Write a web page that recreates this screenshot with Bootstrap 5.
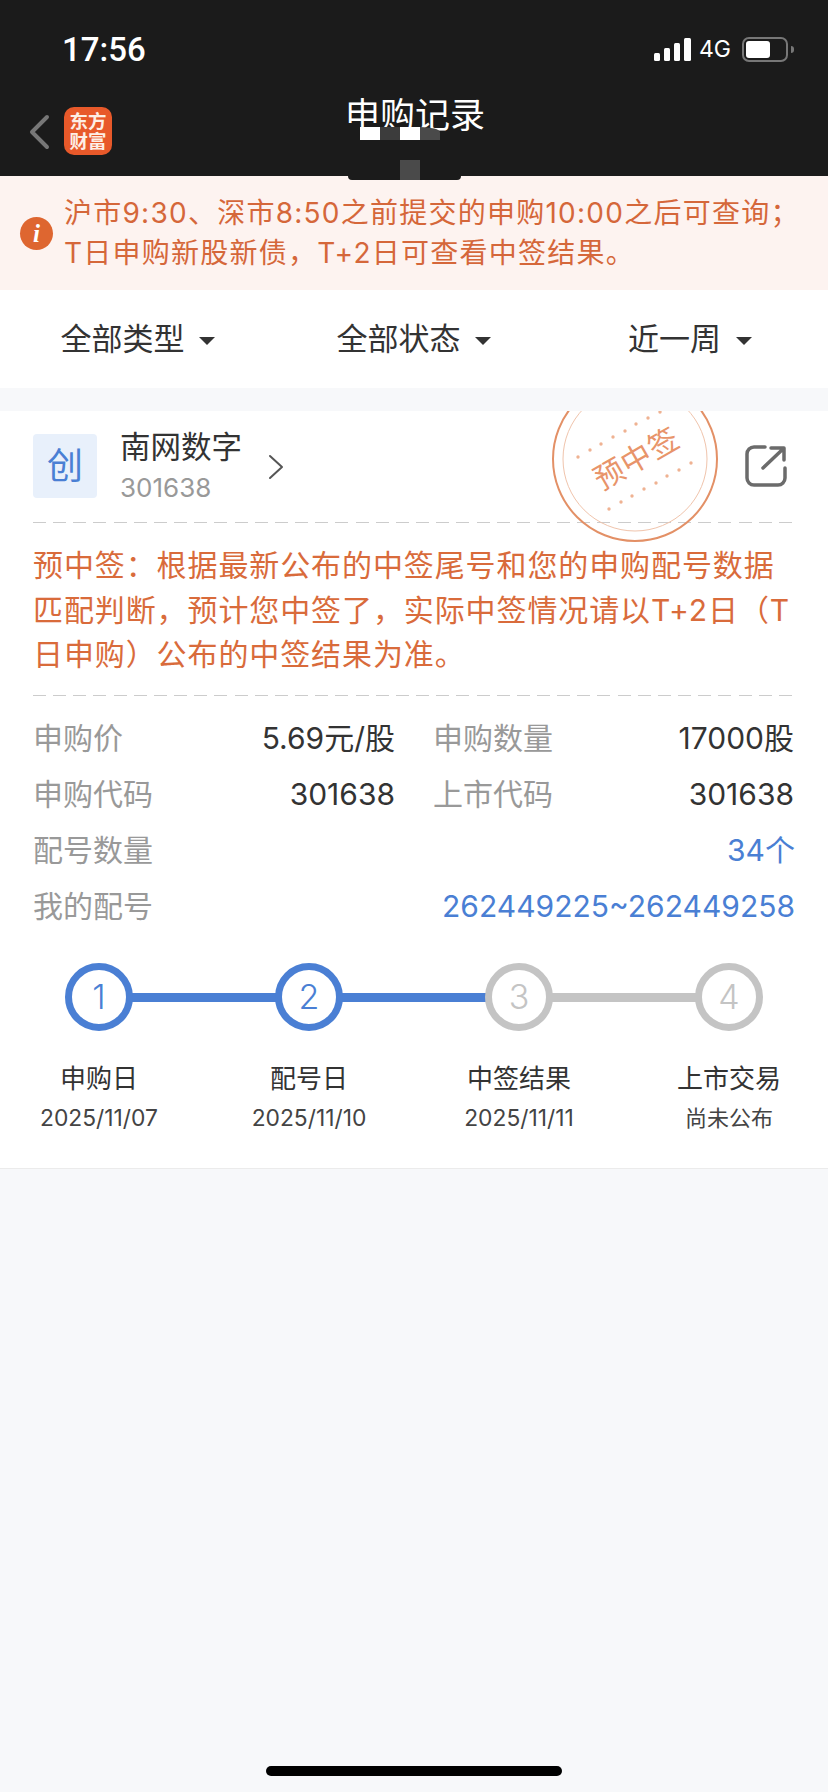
<!DOCTYPE html>
<html lang="zh-CN">
<head>
  <meta charset="UTF-8" />
  <meta name="viewport" content="width=device-width, initial-scale=1.0" />
  <title>申购记录</title>
  <link href="https://cdn.jsdelivr.net/npm/bootstrap@5.3.2/dist/css/bootstrap.min.css" rel="stylesheet">
  <style>
    body {
      width: 828px;
      height: 1792px;
      overflow: hidden;
      background-color: #f7f8fa;
      font-family: Inter, "Noto Sans CJK SC", sans-serif;
      color: #333;
    }
    .top-head {
      height: 176px;
      background-color: #1b1b1b;
      color: #fff;
    }
    .status-row { height: 98px; padding: 0 34px 0 62px; }
    .status-time { font-family: Roboto, "Liberation Sans", sans-serif; font-size: 33px; font-weight: 500; margin-top: 1px; }
    .net-label { font-size: 23px; margin: 0 11px 0 8px; line-height: 1; }
    .batt-box { width: 46px; height: 25px; border: 2px solid #777; border-radius: 7px; padding: 2px; }
    .batt-fill { width: 24px; height: 100%; background-color: #fff; border-radius: 3px; }
    .batt-nub { width: 3px; height: 7px; margin-left: 3px; background-color: #777; border-radius: 0 3px 3px 0; }
    .nav-line { height: 78px; padding-left: 28px; }
    .app-logo {
      width: 48px;
      height: 48px;
      margin: 9px 0 0 14px;
      border-radius: 10px;
      background-color: #e8592a;
      font-size: 18.5px;
      font-weight: 700;
      line-height: 20px;
      text-align: center;
      padding-top: 4px;
      color: #fdeee5;
    }
    .nav-title {
      top: -6px;
      left: 0;
      right: 0;
      font-size: 35px;
      line-height: 46px;
      text-align: center;
      padding-left: 2px;
    }
    .glitch { top: 127px; left: 360px; height: 13px; width: 80px; display: flex; }
    .glitch i { display: block; width: 20px; height: 100%; }
    .glitch .tone-dark { background-color: #3c3c3c; }
    .glitch .tone-mid { background-color: #4a4a4a; border-radius: 0 100% 0 0 / 0 40% 0 0; }
    .glitch-b { top: 160px; left: 400px; width: 20px; height: 20px; background-color: #4a4a4a; z-index: 2; }
    .notch { top: 176px; left: 348px; width: 113px; height: 4px; background-color: #1b1b1b; border-radius: 0 0 6px 6px; z-index: 1; }
    .notice-box {
      height: 114px;
      background-color: #fdf3f0;
      color: #d5673a;
      padding-left: 20px;
    }
    .notice-ico {
      width: 33px;
      height: 33px;
      flex: none;
      background-color: #de6630;
      color: #fff;
      font-family: "Liberation Serif", serif;
      font-style: italic;
      font-weight: 700;
      font-size: 25px;
      line-height: 33px;
      text-align: center;
    }
    .notice-txt { margin-left: 11px; font-size: 28px; line-height: 40px; letter-spacing: 1.25px; white-space: nowrap; }
    .filter-bar { height: 98px; background-color: #fff; margin-bottom: 23px; font-size: 31px; color: #333; }
    .filter-bar .dropdown-toggle::after {
      margin-left: 15px;
      vertical-align: 5px;
      border-top: 8px solid #333;
      border-right: 8px solid transparent;
      border-left: 8px solid transparent;
      border-bottom: 0;
    }
    .sub-card { height: 758px; background-color: #fff; border-bottom: 1px solid #ebebeb; }
    .sub-head { height: 111px; padding: 23px 41px 0 33px; }
    .mkt-tag {
      width: 64px;
      height: 64px;
      flex: none;
      background-color: #e8f0fb;
      border-radius: 4px;
      color: #4a7fd4;
      font-size: 36px;
      line-height: 64px;
      text-align: center;
    }
    .stock-info { margin-left: 23px; }
    .stock-name { font-size: 30.5px; line-height: 36px; margin-top: -5px; }
    .stock-code { font-size: 26px; line-height: 30px; color: #999; margin-top: 8px; }
    .stock-arrow { margin: 20px 0 0 26px; }
    .stamp { top: -35px; left: 552px; }
    .share-ico { margin-left: auto; margin-top: 11px; z-index: 1; }
    .dash-line {
      height: 1px;
      margin: 0 36px 0 33px;
      background-image: repeating-linear-gradient(to right, #ccc 0, #ccc 13px, transparent 13px, transparent 20.16px);
    }
    .win-note {
      height: 172px;
      padding: 20px 30px 0 33px;
      color: #d96b3b;
      font-size: 30px;
      line-height: 44.5px;
      letter-spacing: 0.9px;
    }
    .info-list { padding: 14px 33px 0 33px; font-size: 30px; height: 267px; }
    .info-row { height: 56px; }
    .info-lbl { color: #999; }
    .info-val { color: #333; }
    .info-link { color: #4a7fd4; }
    .half-left { width: 362px; }
    .half-right { width: 361px; margin-left: 38px; }
    .step-wrap { margin-left: -6px; width: 840px; }
    .step-item { width: 210px; }
    .step-dot {
      width: 68px;
      height: 68px;
      margin: 0 auto;
      border: 7px solid #c4c4c4;
      background-color: #fff;
      color: #c4c4c4;
      font-size: 34px;
      font-weight: 300;
      line-height: 54px;
      z-index: 1;
    }
    .step-dot.is-on { border-color: #4a7fd4; color: #4a7fd4; }
    .step-link { top: 30px; left: 105px; width: 210px; height: 9px; background-color: #c4c4c4; }
    .step-link.is-on { background-color: #4a7fd4; }
    .step-name { margin-top: 30px; font-size: 26px; line-height: 36px; color: #333; }
    .step-date { margin-top: 6px; font-size: 22.8px; line-height: 30px; color: #444; }
    .step-date.is-text { font-size: 22px; }
    .home-bar {
      bottom: 16px;
      left: 266px;
      width: 296px;
      height: 10px;
      background-color: #000;
      border-radius: 5px;
    }
  </style>
</head>
<body class="position-relative">
  <header class="top-head">
    <div class="status-row d-flex align-items-center">
      <div class="status-time">17:56</div>
      <div class="ms-auto d-flex align-items-center">
        <svg width="37" height="23" viewBox="0 0 37 23" fill="#fff">
          <rect x="0" y="15" width="6" height="8" rx="1.5"/>
          <rect x="10" y="10" width="6" height="13" rx="1.5"/>
          <rect x="20" y="5" width="6" height="18" rx="1.5"/>
          <rect x="30" y="0" width="7" height="23" rx="1.5"/>
        </svg>
        <span class="net-label">4G</span>
        <div class="batt-box"><div class="batt-fill"></div></div>
        <div class="batt-nub"></div>
      </div>
    </div>
    <div class="nav-line d-flex position-relative">
      <svg class="mt-3" width="22" height="36" viewBox="0 0 22 36" fill="none" stroke="#777" stroke-width="4" stroke-linecap="round" stroke-linejoin="round">
        <path d="M19 3 L4 18 L19 33"/>
      </svg>
      <div class="app-logo">东方<br>财富</div>
      <div class="nav-title position-absolute">申购记录</div>
    </div>
  </header>

  <div class="glitch position-absolute">
    <i class="bg-white"></i><i class="tone-dark"></i><i class="bg-white"></i><i class="tone-mid"></i>
  </div>
  <div class="glitch-b position-absolute"></div>
  <div class="notch position-absolute"></div>

  <section class="notice-box d-flex align-items-center">
    <div class="notice-ico rounded-circle">i</div>
    <div class="notice-txt">沪市9:30、深市8:50之前提交的申购10:00之后可查询；<br>T日申购新股新债，T+2日可查看中签结果。</div>
  </section>

  <div class="filter-bar row g-0 align-items-center text-center">
    <div class="col-4"><span class="dropdown-toggle">全部类型</span></div>
    <div class="col-4"><span class="dropdown-toggle">全部状态</span></div>
    <div class="col-4"><span class="dropdown-toggle">近一周</span></div>
  </div>

  <section class="sub-card position-relative overflow-hidden">
    <div class="sub-head d-flex position-relative">
      <div class="mkt-tag">创</div>
      <div class="stock-info">
        <div class="stock-name">南网数字</div>
        <div class="stock-code">301638</div>
      </div>
      <svg class="stock-arrow" width="16" height="26" viewBox="0 0 16 26" fill="none" stroke="#555" stroke-width="2" stroke-linecap="round" stroke-linejoin="round">
        <path d="M2 2 L14 13 L2 24"/>
      </svg>
      <svg class="stamp position-absolute" width="166" height="166" viewBox="0 0 166 166">
        <circle cx="83" cy="83" r="82" fill="none" stroke="#e39066" stroke-width="2"/>
        <circle cx="83" cy="83" r="72" fill="none" stroke="#f0c4ac" stroke-width="1"/>
        <g fill="#efb292">
          <circle cx="26" cy="81" r="1.7"/><circle cx="38" cy="74" r="1.7"/><circle cx="49" cy="68" r="1.7"/><circle cx="61" cy="61" r="1.7"/>
          <circle cx="73" cy="55" r="1.7"/><circle cx="84" cy="48" r="1.7"/><circle cx="96" cy="42" r="1.7"/><circle cx="108" cy="36" r="1.7"/>
          <circle cx="57" cy="133" r="1.7"/><circle cx="69" cy="126" r="1.7"/><circle cx="80" cy="120" r="1.7"/><circle cx="92" cy="113" r="1.7"/>
          <circle cx="104" cy="107" r="1.7"/><circle cx="115" cy="100" r="1.7"/><circle cx="127" cy="94" r="1.7"/><circle cx="139" cy="87" r="1.7"/>
        </g>
        <text x="85" y="93" transform="rotate(-30 85 83)" text-anchor="middle" fill="#e8946a" font-size="30" letter-spacing="1" font-family="'Noto Sans CJK SC', sans-serif">预中签</text>
      </svg>
      <svg class="share-ico position-relative" width="42" height="42" viewBox="0 0 42 42" fill="none" stroke="#6b6b6b" stroke-width="3.5" stroke-linecap="round" stroke-linejoin="round">
        <path d="M20 2 H9 a7 7 0 0 0 -7 7 V33 a7 7 0 0 0 7 7 H33 a7 7 0 0 0 7 -7 V23"/>
        <path d="M18 23 L38 4 M26 3 H39 V15"/>
      </svg>
    </div>
    <div class="dash-line"></div>
    <div class="win-note">预中签：根据最新公布的中签尾号和您的申购配号数据匹配判断，预计您中签了，实际中签情况请以T+2日（T日申购）公布的中签结果为准。</div>
    <div class="dash-line"></div>

    <div class="info-list">
      <div class="info-row d-flex align-items-center">
        <div class="half-left d-flex justify-content-between"><span class="info-lbl">申购价</span><span class="info-val">5.69元/股</span></div>
        <div class="half-right d-flex justify-content-between"><span class="info-lbl">申购数量</span><span class="info-val">17000股</span></div>
      </div>
      <div class="info-row d-flex align-items-center">
        <div class="half-left d-flex justify-content-between"><span class="info-lbl">申购代码</span><span class="info-val">301638</span></div>
        <div class="half-right d-flex justify-content-between"><span class="info-lbl">上市代码</span><span class="info-val">301638</span></div>
      </div>
      <div class="info-row d-flex align-items-center justify-content-between">
        <span class="info-lbl">配号数量</span><span class="info-link">34个</span>
      </div>
      <div class="info-row d-flex align-items-center justify-content-between">
        <span class="info-lbl">我的配号</span><span class="info-link">262449225~262449258</span>
      </div>
    </div>

    <div class="step-wrap d-flex text-center">
      <div class="step-item position-relative">
        <div class="step-link is-on position-absolute"></div>
        <div class="step-dot is-on rounded-circle position-relative">1</div>
        <div class="step-name">申购日</div>
        <div class="step-date">2025/11/07</div>
      </div>
      <div class="step-item position-relative">
        <div class="step-link is-on position-absolute"></div>
        <div class="step-dot is-on rounded-circle position-relative">2</div>
        <div class="step-name">配号日</div>
        <div class="step-date">2025/11/10</div>
      </div>
      <div class="step-item position-relative">
        <div class="step-link position-absolute"></div>
        <div class="step-dot rounded-circle position-relative">3</div>
        <div class="step-name">中签结果</div>
        <div class="step-date">2025/11/11</div>
      </div>
      <div class="step-item position-relative">
        <div class="step-dot rounded-circle position-relative">4</div>
        <div class="step-name">上市交易</div>
        <div class="step-date is-text">尚未公布</div>
      </div>
    </div>
  </section>

  <div class="home-bar position-absolute"></div>

  <script src="https://cdn.jsdelivr.net/npm/bootstrap@5.3.2/dist/js/bootstrap.bundle.min.js"></script>
</body>
</html>
